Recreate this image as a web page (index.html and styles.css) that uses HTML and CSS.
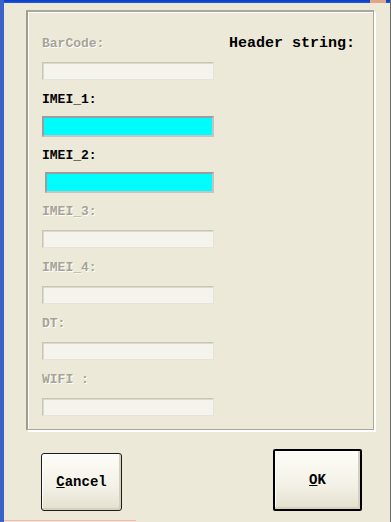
FILE: index.html
```html
<!DOCTYPE html>
<html>
<head>
<meta charset="utf-8">
<link rel="stylesheet" href="styles.css">
</head>
<body>
<div class="window">
  <div class="titleedge"><span class="corner"></span></div>
  <div class="client">
    <div class="group">
      <div class="fields">
        <div class="field">
          <div class="label disabled">BarCode:</div>
          <div class="box off"></div>
        </div>
        <div class="field">
          <div class="label">IMEI_1:</div>
          <div class="box cyan"></div>
        </div>
        <div class="field">
          <div class="label">IMEI_2:</div>
          <div class="box cyan shift"></div>
        </div>
        <div class="field">
          <div class="label disabled">IMEI_3:</div>
          <div class="box off"></div>
        </div>
        <div class="field">
          <div class="label disabled">IMEI_4:</div>
          <div class="box off"></div>
        </div>
        <div class="field">
          <div class="label disabled">DT:</div>
          <div class="box off"></div>
        </div>
        <div class="field">
          <div class="label disabled">WIFI :</div>
          <div class="box off"></div>
        </div>
      </div>
      <div class="header">Header string:</div>
    </div>
    <div class="buttons">
      <button class="btn cancel"><span class="u">C</span>ancel</button>
      <button class="btn ok default"><span class="u">O</span>K</button>
    </div>
  </div>
  <div class="taskstrip"></div>
</div>
</body>
</html>
```

FILE: styles.css
```css
html, body {
  margin: 0;
  padding: 0;
  background: #ece9d8;
}
.window {
  position: relative;
  width: 391px;
  height: 522px;
  box-sizing: border-box;
  border-left: 4px solid #3a62c8;
  border-right: 1px solid #6b6b6b;
  background: #ece9d8;
  overflow: hidden;
  font-family: "Liberation Mono", "DejaVu Sans Mono", monospace;
}
.titleedge {
  height: 3px;
  background: linear-gradient(#0a3ac2, #1c5ae0);
  display: flex;
  justify-content: flex-end;
}
.corner {
  width: 16px;
  height: 3px;
  margin-right: 4px;
  background: #e2a58a;
}
.client {
  display: flex;
  flex-direction: column;
}
.group {
  margin: 7px 16px 0 22px;
  height: 420px;
  box-sizing: border-box;
  border-top: 2px solid #aca899;
  border-left: 2px solid #a09c8c;
  border-right: 1px solid #aca899;
  border-bottom: 1px solid #aca899;
  box-shadow: inset 1px 1px 0 #fff, 2px 2px 0 #fff;
  padding: 23px 0 0 14px;
  display: flex;
}
.fields {
  width: 172px;
  display: flex;
  flex-direction: column;
}
.field {
  height: 56px;
  display: flex;
  flex-direction: column;
}
.label {
  height: 18px;
  line-height: 18px;
  font-size: 13px;
  font-weight: bold;
  color: #000;
  margin-bottom: 9px;
}
.label.disabled {
  color: #a7a497;
  text-shadow: 1px 1px 0 #fff;
}
.box {
  height: 18px;
  box-sizing: border-box;
}
.box.off {
  background: #f4f3ec;
  border: 1px solid #c9c6b8;
  border-right-color: #e6e4da;
  border-bottom-color: #e6e4da;
  box-shadow: inset 1px 1px 0 #dcd9cc;
}
.box.cyan {
  height: 21px;
  margin-top: -2px;
  background: #00fdfd;
  border: 2px solid #9d9d9d;
  border-right-color: #c4c4c4;
  border-bottom-color: #c4c4c4;
}
.box.shift {
  margin-left: 3px;
}
.header {
  margin-left: 15px;
  height: 18px;
  line-height: 18px;
  font-size: 15px;
  font-weight: bold;
  color: #000;
  white-space: nowrap;
}
.buttons {
  display: flex;
  justify-content: space-between;
  align-items: flex-end;
  padding: 0 28px 0 37px;
  margin-top: 19px;
}
.btn {
  font-family: "Liberation Mono", "DejaVu Sans Mono", monospace;
  font-weight: bold;
  font-size: 14px;
  color: #000;
  background: linear-gradient(#fdfdf8 0%, #f3f1e6 60%, #e3dfcd 100%);
  border: 1px solid #1c1c1c;
  border-radius: 3px;
  box-shadow: inset -2px -2px 0 #d6d0bc, inset 1px 1px 0 #fff;
  padding: 0;
  cursor: default;
}
.cancel {
  width: 81px;
  height: 58px;
}
.ok {
  width: 89px;
  height: 62px;
  border: 2px solid #000;
  border-radius: 2px;
}
.u {
  text-decoration: underline;
}
.taskstrip {
  position: absolute;
  left: -4px;
  bottom: 1px;
  width: 136px;
  height: 1px;
  background: #f2b8b0;
}
```
